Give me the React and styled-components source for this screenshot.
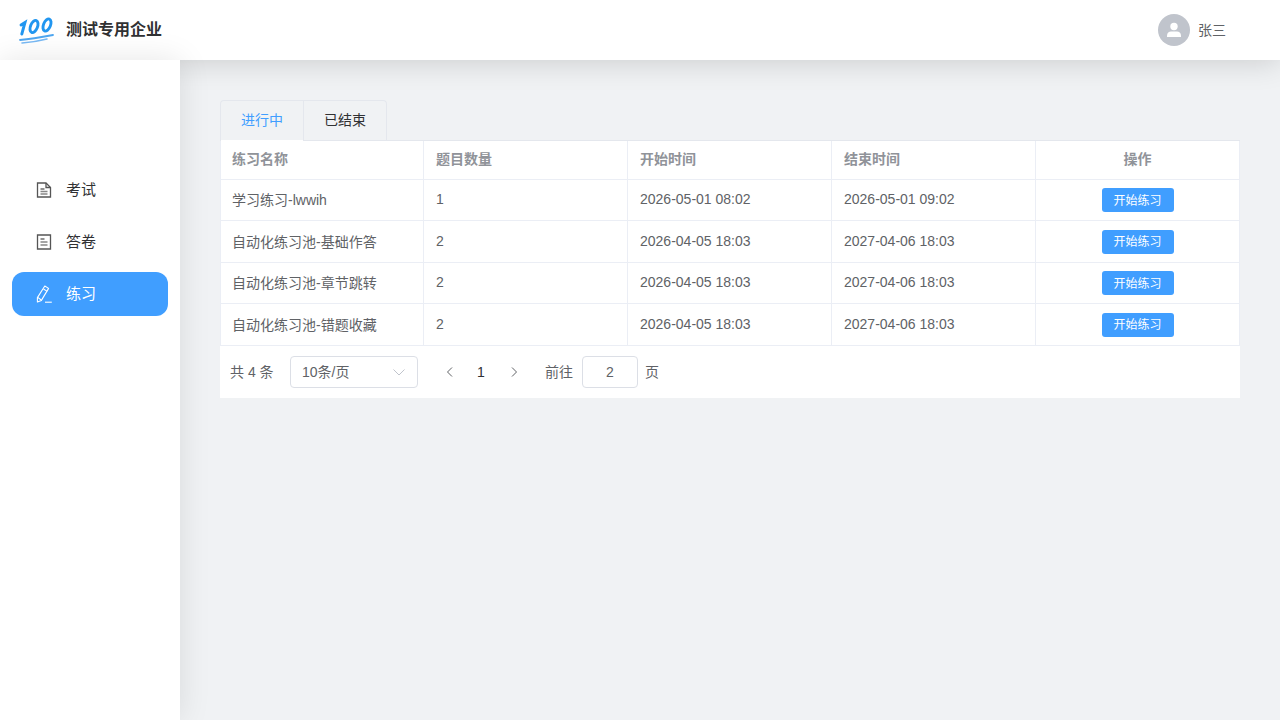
import React from 'react';
import styled, { createGlobalStyle } from 'styled-components';

const GlobalStyle = createGlobalStyle`
  html, body {
    margin: 0;
    padding: 0;
    height: 100%;
    overflow: hidden;
    font-family: "Liberation Sans", "Noto Sans CJK SC", sans-serif;
    font-size: 14px;
    color: #606266;
    background: #f0f2f4;
  }
  #root { height: 100%; }
  * { box-sizing: border-box; }
`;

const Page = styled.div`
  display: flex;
  flex-direction: column;
  width: 1280px;
  height: 720px;
`;

const Header = styled.header`
  position: relative;
  z-index: 2;
  flex: none;
  display: flex;
  align-items: center;
  justify-content: space-between;
  height: 60px;
  padding: 0 54px 0 18px;
  background: #fff;
  box-shadow: 0 2px 30px rgba(0, 0, 0, 0.16);
`;

const Brand = styled.div`
  display: flex;
  align-items: center;
  gap: 11px;
`;

const BrandName = styled.span`
  padding-bottom: 5px;
  font-size: 16px;
  font-weight: 700;
  color: #303133;
`;

const User = styled.div`
  display: flex;
  align-items: center;
  gap: 8px;
`;

const UserName = styled.span`
  padding-bottom: 3px;
`;

const Avatar = styled.span`
  display: flex;
  align-items: center;
  justify-content: center;
  width: 32px;
  height: 32px;
  border-radius: 50%;
  background: #c0c4cc;
`;

const Body = styled.div`
  flex: 1;
  display: flex;
  min-height: 0;
`;

const Sidebar = styled.aside`
  position: relative;
  z-index: 3;
  flex: none;
  display: flex;
  flex-direction: column;
  gap: 8px;
  width: 180px;
  padding: 108px 12px 0;
  background: #fff;
  box-shadow: 0 0 30px rgba(0, 0, 0, 0.1);
`;

const NavItem = styled.div`
  display: flex;
  align-items: center;
  gap: 14px;
  height: 44px;
  padding-left: 24px;
  border-radius: 12px;
  font-size: 15px;
  color: ${p => (p.$active ? '#fff' : '#303133')};
  background: ${p => (p.$active ? '#409eff' : 'transparent')};
`;

const NavLabel = styled.span`
  padding-bottom: 4px;
`;

const Main = styled.main`
  flex: 1;
  padding: 40px 40px 0;
`;

const TabList = styled.div`
  display: flex;
  width: max-content;
  height: 40px;
  border: 1px solid #e4e7ed;
  border-bottom: none;
  border-radius: 4px 4px 0 0;
`;

const Tab = styled.div`
  position: relative;
  display: flex;
  align-items: center;
  justify-content: center;
  width: ${p => (p.$active ? '82px' : '83px')};
  padding-bottom: 4px;
  color: ${p => (p.$active ? '#409eff' : '#303133')};
  border-left: ${p => (p.$active ? 'none' : '1px solid #e4e7ed')};

  ${p =>
    p.$active &&
    `&::after {
      content: '';
      position: absolute;
      left: 0;
      right: 0;
      bottom: -1px;
      height: 1px;
      background: #fff;
      z-index: 1;
    }`}
`;

const Table = styled.div`
  display: grid;
  grid-template-columns: repeat(5, 204px);
  grid-template-rows: 38.85px repeat(4, 41.5px);
  background: #fff;
  border-top: 1px solid #e4e7ed;
`;

const Cell = styled.div`
  display: flex;
  align-items: center;
  justify-content: ${p => (p.$center ? 'center' : 'flex-start')};
  padding: 0 12px ${p => (p.$head ? '4px' : p.$action ? '0' : '2px')};
  border-right: 1px solid #ebeef5;
  border-bottom: 1px solid #ebeef5;
  font-size: 14px;
  font-weight: ${p => (p.$head ? 700 : 400)};
  color: ${p => (p.$head ? '#909399' : '#606266')};

  &:nth-child(5n + 1) {
    box-shadow: inset 1px 0 0 #ebeef5;
  }
`;

const StartButton = styled.button`
  width: 72px;
  height: 24px;
  padding: 0 0 2px;
  border: none;
  border-radius: 3px;
  background: #409eff;
  color: #fff;
  font: inherit;
  font-size: 12px;
`;

const Pagination = styled.div`
  display: flex;
  align-items: center;
  height: 52.15px;
  padding: 0.15px 0 0 10px;
  background: #fff;
  font-size: 14px;
`;

const PagerText = styled.span`
  padding-bottom: 2px;
`;

const Total = styled(PagerText)`
  width: 60px;
`;

const SizeSelect = styled.div`
  display: flex;
  align-items: center;
  justify-content: space-between;
  width: 128px;
  height: 32px;
  padding: 0 11px;
  border: 1px solid #dcdfe6;
  border-radius: 4px;
  margin-right: 16px;
`;

const Arrow = styled.span`
  display: flex;
  align-items: center;
  justify-content: center;
  width: 32px;
`;

const PageNumber = styled.span`
  width: 30px;
  margin-right: 2px;
  text-align: center;
  color: #303133;
`;

const Jump = styled.div`
  display: flex;
  align-items: center;
  margin-left: 15px;
`;

const JumpInput = styled.div`
  display: flex;
  align-items: center;
  justify-content: center;
  width: 56px;
  height: 32px;
  margin: 0 7px 0 9px;
  border: 1px solid #dcdfe6;
  border-radius: 4px;
`;

const Logo = () => (
  <svg width="37" height="30" viewBox="0 0 37 30" fill="none">
    <g stroke="#2196f0" strokeWidth="2.9" strokeLinecap="round">
      <path d="M3 10 L7 7.5 L3.8 19" />
      <ellipse cx="16" cy="11.5" rx="3.5" ry="6.4" transform="rotate(22 16 11.5)" />
      <ellipse cx="29" cy="10" rx="3.5" ry="6.4" transform="rotate(22 29 10)" />
    </g>
    <path d="M2 25 C12 24 24 22 35 20" stroke="#4ea6f0" strokeWidth="1.8" strokeLinecap="round" />
    <path d="M4 28 C12 27.5 21 26 29 24" stroke="#78b9f4" strokeWidth="1.6" strokeLinecap="round" />
  </svg>
);

const UserIcon = () => (
  <svg width="16" height="16" viewBox="0 0 16 16" fill="#fff">
    <circle cx="8" cy="4.5" r="3.7" />
    <path d="M1 15 v-1.6 C1 11 3 9.6 5 9.6 h6 c2 0 4 1.4 4 3.8 V15 z" />
  </svg>
);

const DocFoldIcon = () => (
  <svg width="16" height="16" viewBox="0 0 16 16" fill="none" stroke="#555" strokeWidth="1.3">
    <path d="M1.5 1 H10 L14.5 5.5 V15 H1.5 Z" />
    <path d="M10 1 V5.5 H14.5" />
    <path d="M4.5 7 H8.5" />
    <path d="M4.5 9.5 H11.5 M4.5 12 H11.5" stroke="#888" />
  </svg>
);

const DocIcon = () => (
  <svg width="16" height="16" viewBox="0 0 16 16" fill="none" stroke="#555" strokeWidth="1.3">
    <path d="M1.5 1 H14.5 V15 H1.5 Z" />
    <path d="M4.5 5 H8.5" />
    <path d="M4.5 8 H11.5 M4.5 11 H11.5" stroke="#888" />
  </svg>
);

const PencilIcon = () => (
  <svg width="16" height="18" viewBox="0 0 16 18" fill="none" stroke="#fff" strokeWidth="1.1" strokeLinejoin="round">
    <path d="M8.8 1 L12.6 3.4 L5.4 15.4 L1.4 17 L1.4 12.6 Z" />
    <path d="M1.8 12.4 L5.2 15" />
    <path d="M7.5 4 L11.2 6.4" />
    <path d="M9 17.2 H15.8" />
  </svg>
);

const ChevronDown = () => (
  <svg width="14" height="14" viewBox="0 0 14 14" fill="none" stroke="#c0c4cc" strokeWidth="1">
    <path d="M1.5 4.5 L7 10 L12.5 4.5" />
  </svg>
);

const Chevron = ({ left }) => (
  <svg width="12" height="12" viewBox="0 0 12 12" fill="none" stroke="#606266" strokeWidth="1">
    <path d={left ? 'M8 1.5 L3.5 6 L8 10.5' : 'M4 1.5 L8.5 6 L4 10.5'} />
  </svg>
);

const rows = [
  ['学习练习-lwwih', '1', '2026-05-01 08:02', '2026-05-01 09:02'],
  ['自动化练习池-基础作答', '2', '2026-04-05 18:03', '2027-04-06 18:03'],
  ['自动化练习池-章节跳转', '2', '2026-04-05 18:03', '2027-04-06 18:03'],
  ['自动化练习池-错题收藏', '2', '2026-04-05 18:03', '2027-04-06 18:03'],
];

const heads = ['练习名称', '题目数量', '开始时间', '结束时间'];

export default function App() {
  return (
    <>
      <GlobalStyle />
      <Page>
        <Header>
          <Brand>
            <Logo />
            <BrandName>测试专用企业</BrandName>
          </Brand>
          <User>
            <Avatar>
              <UserIcon />
            </Avatar>
            <UserName>张三</UserName>
          </User>
        </Header>
        <Body>
          <Sidebar>
            <NavItem>
              <DocFoldIcon />
              <NavLabel>考试</NavLabel>
            </NavItem>
            <NavItem>
              <DocIcon />
              <NavLabel>答卷</NavLabel>
            </NavItem>
            <NavItem $active>
              <PencilIcon />
              <NavLabel>练习</NavLabel>
            </NavItem>
          </Sidebar>
          <Main>
            <TabList>
              <Tab $active>进行中</Tab>
              <Tab>已结束</Tab>
            </TabList>
            <Table>
              {heads.map(h => (
                <Cell $head key={h}>{h}</Cell>
              ))}
              <Cell $head $center>操作</Cell>
              {rows.map(row => (
                <React.Fragment key={row[0]}>
                  {row.map((v, i) => (
                    <Cell key={i}>{v}</Cell>
                  ))}
                  <Cell $center $action>
                    <StartButton>开始练习</StartButton>
                  </Cell>
                </React.Fragment>
              ))}
            </Table>
            <Pagination>
              <Total>共 4 条</Total>
              <SizeSelect>
                <PagerText>10条/页</PagerText>
                <ChevronDown />
              </SizeSelect>
              <Arrow><Chevron left /></Arrow>
              <PageNumber>1</PageNumber>
              <Arrow><Chevron /></Arrow>
              <Jump>
                <PagerText>前往</PagerText>
                <JumpInput>2</JumpInput>
                <PagerText>页</PagerText>
              </Jump>
            </Pagination>
          </Main>
        </Body>
      </Page>
    </>
  );
}
